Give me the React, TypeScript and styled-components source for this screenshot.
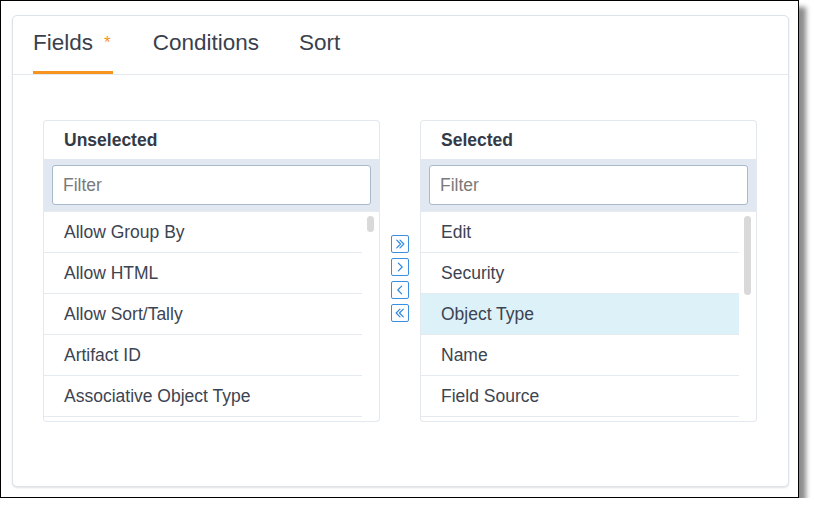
import styled, {createGlobalStyle} from "styled-components";

const GlobalStyle = createGlobalStyle`
    html, body {
        margin: 0;
        padding: 0;
        background: #ffffff;
    }
    body {
        font-family: "Liberation Sans", Arial, sans-serif;
        color: #3d4451;
    }
    * {
        box-sizing: border-box;
    }
`;

const unselected = ["Allow Group By", "Allow HTML", "Allow Sort/Tally", "Artifact ID", "Associative Object Type"];
const selected = ["Edit", "Security", "Object Type", "Name", "Field Source"];

type Move = "allRight" | "right" | "left" | "allLeft";

function Chevron({dir, double}: {dir: "left" | "right"; double?: boolean}) {
    const single = dir === "right" ? "M4 2 L7.5 5.5 L4 9" : "M7 2 L3.5 5.5 L7 9";
    const pair = dir === "right"
        ? "M2.5 2 L6 5.5 L2.5 9 M5.5 2 L9 5.5 L5.5 9"
        : "M8.5 2 L5 5.5 L8.5 9 M5.5 2 L2 5.5 L5.5 9";
    return (
        <svg width="12" height="12" viewBox="0 0 11 11" fill="none">
            <path d={double ? pair : single} stroke="#2f87de" strokeWidth="1.1" strokeLinecap="round" strokeLinejoin="round"/>
        </svg>
    );
}

function FieldList({title, items, active, thumb}: {title: string; items: string[]; active?: string; thumb: number}) {
    return (
        <Panel>
            <PanelHeader>{title}</PanelHeader>
            <FilterBar>
                <FilterInput placeholder="Filter"/>
            </FilterBar>
            <ListBox>
                <Rows>
                    {items.map(item => (
                        <Row key={item} $active={item === active}>{item}</Row>
                    ))}
                </Rows>
                <Track>
                    <Thumb style={{height: thumb}}/>
                </Track>
            </ListBox>
        </Panel>
    );
}

export default function App() {
    const moves: {id: Move; dir: "left" | "right"; double?: boolean}[] = [
        {id: "allRight", dir: "right", double: true},
        {id: "right", dir: "right"},
        {id: "left", dir: "left"},
        {id: "allLeft", dir: "left", double: true},
    ];

    return (
        <>
            <GlobalStyle/>
            <Frame>
                <Card>
                    <TabBar>
                        <Tab $active>
                            Fields<Required>*</Required>
                        </Tab>
                        <Tab>Conditions</Tab>
                        <Tab>Sort</Tab>
                    </TabBar>
                    <Content>
                        <FieldList title="Unselected" items={unselected} thumb={16}/>
                        <Mover>
                            {moves.map(m => (
                                <MoveButton key={m.id} type="button">
                                    <Chevron dir={m.dir} double={m.double}/>
                                </MoveButton>
                            ))}
                        </Mover>
                        <FieldList title="Selected" items={selected} active="Object Type" thumb={79}/>
                    </Content>
                </Card>
            </Frame>
        </>
    );
}

const Frame = styled.div`
    width: 799px;
    height: 498px;
    border: 1px solid #000000;
    padding: 14px 9px 10px 11px;
    background: #ffffff;
    box-shadow: 7px 7px 5px rgba(0, 0, 0, 0.45);
`;

const Card = styled.div`
    width: 777px;
    height: 472px;
    border: 1px solid #dde3ea;
    border-radius: 5px;
    box-shadow: 0 1px 2px rgba(0, 0, 0, 0.12);
    background: #ffffff;
`;

const TabBar = styled.div`
    display: flex;
    align-items: flex-end;
    gap: 40px;
    height: 59px;
    padding-left: 20px;
    border-bottom: 1px solid #e3e8ee;
`;

const Tab = styled.div<{ $active?: boolean }>`
    display: flex;
    align-items: flex-start;
    font-size: 22.5px;
    line-height: 26px;
    padding: 14px 0 15px;
    color: #3a414d;
    border-bottom: 3px solid ${p => (p.$active ? "#f7941d" : "transparent")};
    cursor: pointer;
`;

const Required = styled.span`
    color: #f7941d;
    font-size: 17px;
    line-height: 18px;
    margin: 4px 2px 0 11px;
`;

const Content = styled.div`
    display: flex;
    align-items: flex-start;
    gap: 11px;
    padding: 45px 31px 0 30px;
`;

const Panel = styled.div`
    display: flex;
    flex-direction: column;
    width: 337px;
    height: 302px;
`;

const PanelHeader = styled.div`
    height: 39px;
    padding: 0 20px;
    display: flex;
    align-items: center;
    font-size: 17.5px;
    font-weight: bold;
    color: #343b47;
    border: 1px solid #e3e8ef;
    border-bottom: none;
    border-radius: 4px 4px 0 0;
`;

const FilterBar = styled.div`
    height: 52px;
    padding: 6px 9px;
    background: #e1e8f1;
`;

const FilterInput = styled.input`
    width: 100%;
    height: 40px;
    padding: 0 10px;
    border: 1px solid #a9bacd;
    border-radius: 3px;
    font-family: inherit;
    font-size: 17.5px;
    color: #3d4451;
    background: #ffffff;
    outline: none;

    &::placeholder {
        color: #7a7a7a;
    }
`;

const ListBox = styled.div`
    flex: 1;
    display: flex;
    overflow: hidden;
    border: 1px solid #e3e8ef;
    border-top-color: #e6ebf1;
    border-radius: 0 0 4px 4px;
`;

const Rows = styled.div`
    flex: 1;
    display: flex;
    flex-direction: column;
`;

const Row = styled.div<{ $active?: boolean }>`
    flex: none;
    height: 41px;
    padding: 0 20px;
    display: flex;
    align-items: center;
    font-size: 17.5px;
    color: #3d4451;
    background: ${p => (p.$active ? "#dcf1f8" : "transparent")};
    border-bottom: 1px solid #e4eaf0;
`;

const Track = styled.div`
    width: 17px;
    flex: none;
    padding: 4px 5px 0;
`;

const Thumb = styled.div`
    width: 7px;
    border-radius: 4px;
    background: #d9d9d9;
`;

const Mover = styled.div`
    display: flex;
    flex-direction: column;
    gap: 5px;
    width: 18px;
    padding-top: 115px;
`;

const MoveButton = styled.button`
    width: 18px;
    height: 18px;
    padding: 0;
    display: flex;
    align-items: center;
    justify-content: center;
    border: 1px solid #3a8fe3;
    border-radius: 2px;
    background: #ffffff;
    cursor: pointer;
`;
